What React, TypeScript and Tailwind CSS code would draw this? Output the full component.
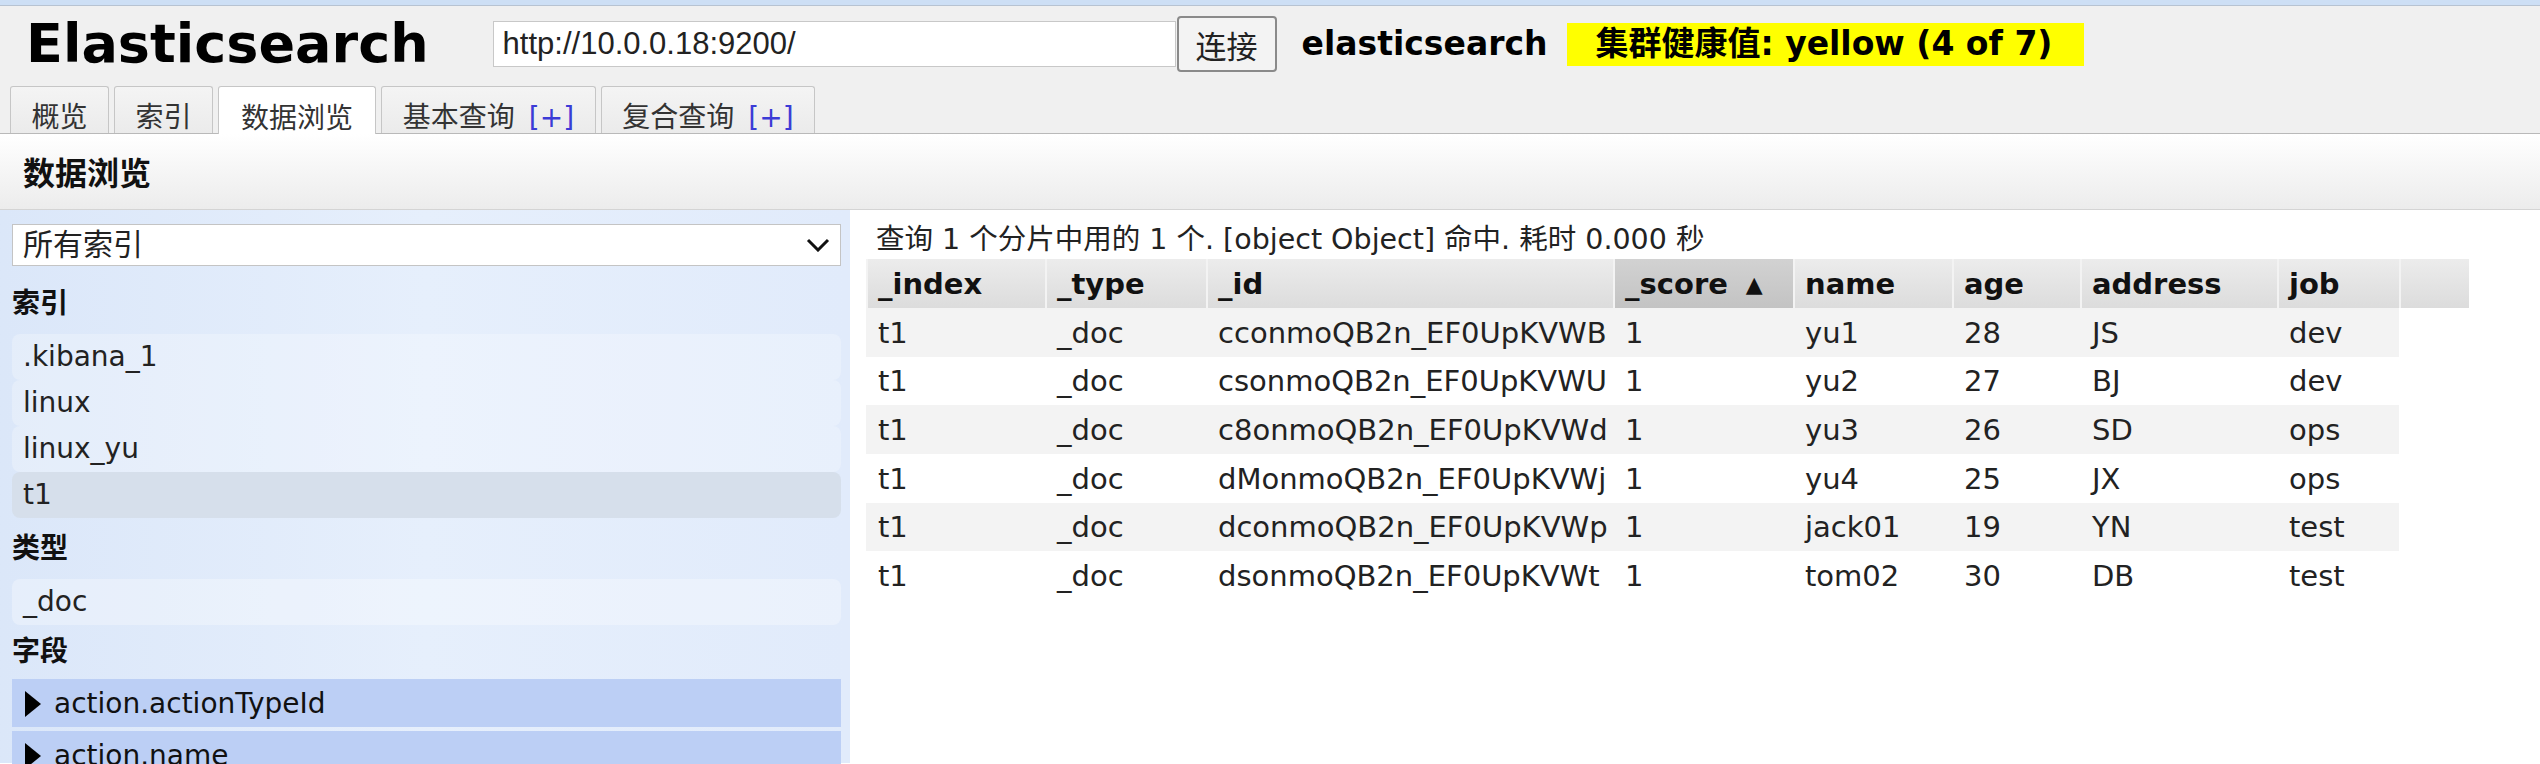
import React from 'react';

const sans = "font-['DejaVu_Sans','Noto_Sans_CJK_SC',sans-serif]";

const tabs = [
  { label: '概览', w: 'w-[99px]' },
  { label: '索引', w: 'w-[99px]' },
  { label: '数据浏览', w: 'w-[158px]', active: true },
  { label: '基本查询', w: 'w-[215px]', plus: true },
  { label: '复合查询', w: 'w-[214px]', plus: true },
];

const columns = [
  { name: '_index', w: 'w-[179px]' },
  { name: '_type', w: 'w-[161px]' },
  { name: '_id', w: 'w-[407px]' },
  { name: '_score', w: 'w-[180px]', sorted: true },
  { name: 'name', w: 'w-[159px]' },
  { name: 'age', w: 'w-[128px]' },
  { name: 'address', w: 'w-[197px]' },
  { name: 'job', w: 'w-[122px]' },
];

const rows = [
  ['t1', '_doc', 'cconmoQB2n_EF0UpKVWB', '1', 'yu1', '28', 'JS', 'dev'],
  ['t1', '_doc', 'csonmoQB2n_EF0UpKVWU', '1', 'yu2', '27', 'BJ', 'dev'],
  ['t1', '_doc', 'c8onmoQB2n_EF0UpKVWd', '1', 'yu3', '26', 'SD', 'ops'],
  ['t1', '_doc', 'dMonmoQB2n_EF0UpKVWj', '1', 'yu4', '25', 'JX', 'ops'],
  ['t1', '_doc', 'dconmoQB2n_EF0UpKVWp', '1', 'jack01', '19', 'YN', 'test'],
  ['t1', '_doc', 'dsonmoQB2n_EF0UpKVWt', '1', 'tom02', '30', 'DB', 'test'],
];

const indices = ['.kibana_1', 'linux', 'linux_yu', 't1'];

function Triangle() {
  return (
    <svg width="18" height="28" viewBox="0 0 18 28" className="shrink-0">
      <polygon points="1,1 17,14 1,27" fill="#000" />
    </svg>
  );
}

export default function App() {
  return (
    <div className={`w-[2540px] h-[764px] overflow-hidden bg-white text-[#222] ${sans}`}>
      {/* window strip */}
      <div className="h-[6px] bg-[#cddff5] border-b border-[#b7c3d2]" />

      {/* header */}
      <header className="bg-[#f0f0f0] border-b border-[#b9b9b9]">
        <div className="h-[76px] flex items-center pl-[26px]">
          <h1 className="text-[54px] leading-none font-bold text-black font-['DejaVu_Sans',sans-serif]">
            Elasticsearch
          </h1>
          <div className="ml-[64px] w-[683px] h-[46px] bg-white border border-[#c8c8c8] flex items-center pl-[9px]">
            <span className="text-[31px] text-[#222] font-['Liberation_Sans',Arial,sans-serif]">http://10.0.0.18:9200/</span>
          </div>
          <button className="ml-[1px] w-[100px] h-[56px] rounded-[4px] border-2 border-[#8a8a8a] bg-[#f3f3f3] text-[31px] leading-none text-[#222] font-['Noto_Sans_CJK_SC',sans-serif]">
            连接
          </button>
          <span className="ml-[25px] text-[33px] font-bold text-black">elasticsearch</span>
          <span className="ml-[20px] w-[517px] h-[43px] flex items-center bg-[#ffff00] pl-[28px] text-[33px] font-bold text-black">
            集群健康值: yellow (4 of 7)
          </span>
        </div>
        <div className="pt-[4px] pl-[10px] flex items-end gap-[5px] h-[51px]">
          {tabs.map((t) => (
            <div
              key={t.label}
              className={`${t.w} ${
                t.active ? 'h-[48px] -mb-[1px] bg-white' : 'h-[47px] bg-gradient-to-b from-[#f4f4f4] to-[#ebebeb]'
              } border border-b-0 border-[#c6c6c6] rounded-t-[3px] flex items-end justify-center pb-[1px] text-[28px] leading-[28px] text-[#333]`}
            >
              <span>{t.label}</span>
              {t.plus && <span className="ml-[14px] text-[#3b3bd6]">[+]</span>}
            </div>
          ))}
        </div>
      </header>

      {/* section title */}
      <div className="h-[76px] bg-gradient-to-b from-[#ffffff] to-[#ececec] border-b border-[#d4d4d4] flex items-center pl-[23px] pt-[4px]">
        <h2 className="text-[32px] font-bold text-[#111] leading-none">数据浏览</h2>
      </div>

      <div className="flex h-[553px]">
        {/* sidebar */}
        <aside className="w-[850px] shrink-0 bg-gradient-to-r from-[#dbe7f9] via-[#e6effc] to-[#e1ebfb] pl-[12px] pr-[9px] pt-[14px]">
          <div className="h-[42px] bg-white border border-[#c4c4c4] flex items-center justify-between pl-[10px] pr-[10px]">
            <span className="text-[30px] leading-none text-[#222]">所有索引</span>
            <svg width="24" height="14" viewBox="0 0 24 14">
              <polyline points="2,2 12,12 22,2" fill="none" stroke="#111" strokeWidth="3" />
            </svg>
          </div>

          <div className="mt-[18px] h-[40px] flex items-center text-[28px] font-bold text-[#111]">索引</div>
          <div className="mt-[10px]">
            {indices.map((name) => (
              <div
                key={name}
                className={`h-[46px] flex items-center pl-[11px] rounded-[8px] text-[28px] ${
                  name === 't1' ? 'bg-[#d6dfeb]' : 'bg-white/25'
                }`}
              >
                {name}
              </div>
            ))}
          </div>

          <div className="mt-[11px] h-[40px] flex items-center text-[28px] font-bold text-[#111]">类型</div>
          <div className="mt-[10px] h-[46px] flex items-center pl-[11px] rounded-[8px] bg-white/30 text-[28px]">_doc</div>

          <div className="mt-[7px] h-[40px] flex items-center text-[28px] font-bold text-[#111]">字段</div>
          <div className="mt-[7px] flex flex-col gap-[4px]">
            {['action.actionTypeId', 'action.name', 'action.params'].map((f) => (
              <div key={f} className="h-[48px] bg-[#bccff5] flex items-center gap-[12px] pl-[12px] pt-[2px] text-[28px] text-[#111]">
                <Triangle />
                <span>{f}</span>
              </div>
            ))}
          </div>
        </aside>

        {/* results */}
        <main className="flex-1 pl-[16px] pt-[13px]">
          <div className="h-[32px] flex items-center pl-[10px] pt-[3px] text-[28.5px] text-[#222]">
            查询 1 个分片中用的 1 个. [object Object] 命中. 耗时 0.000 秒
          </div>
          <div className="mt-[4px]">
            <div className="flex h-[49px]">
              {columns.map((c) => (
                <div
                  key={c.name}
                  className={`${c.w} shrink-0 flex items-center pl-[10px] pt-[2px] border-l-2 border-[#f3f3f3] text-[29px] font-bold text-[#111] ${
                    c.sorted ? 'bg-gradient-to-b from-[#d2d2d2] to-[#c3c3c3]' : 'bg-gradient-to-b from-[#ececec] to-[#dcdcdc]'
                  }`}
                >
                  {c.name}
                  {c.sorted && <span className="ml-[18px] text-[22px]">▲</span>}
                </div>
              ))}
              <div className="w-[70px] shrink-0 border-l-2 border-[#f3f3f3] bg-gradient-to-b from-[#ececec] to-[#dcdcdc]" />
            </div>
            {rows.map((r, i) => (
              <div key={r[2]} className={`flex h-[48.7px] w-[1533px] ${i % 2 === 0 ? 'bg-[#f3f3f3]' : 'bg-white'}`}>
                {r.map((v, j) => (
                  <div key={j} className={`${columns[j].w} shrink-0 flex items-center pl-[12px] pt-[2px] text-[29px] text-[#222]`}>
                    {v}
                  </div>
                ))}
              </div>
            ))}
          </div>
        </main>
      </div>
    </div>
  );
}
